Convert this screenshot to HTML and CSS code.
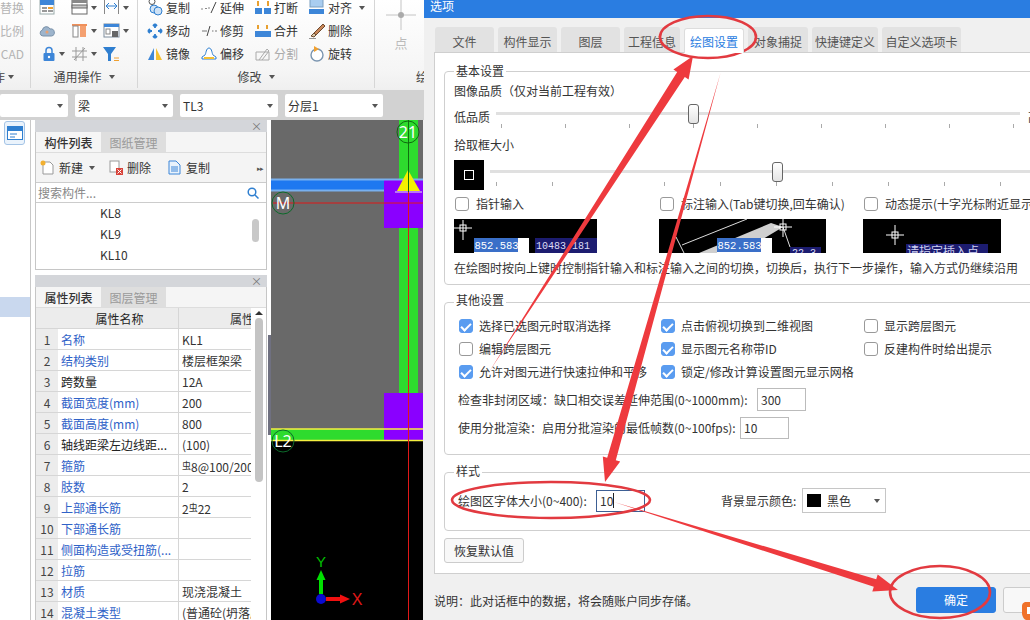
FILE: index.html
```html
<!DOCTYPE html>
<html lang="zh-CN">
<head>
<meta charset="utf-8">
<title>选项</title>
<link rel="stylesheet" href="styles.css">
</head>
<body>
<div class="app">
  <div class="main">
    <div class="ribbon">
      <section class="rgroup g-file">
        <div class="rtools">
          <div class="clip-left muted">替换</div>
          <div class="clip-left muted">比例</div>
          <div class="clip-left muted">CAD</div>
        </div>
        <div class="glabel clip-left"><span>操作</span><i class="caret"></i></div>
      </section>
      <section class="rgroup g-common">
        <div class="rtools icon-grid">
          <span class="ti"><svg width="16" height="16" viewBox="0 0 16 16"><rect x="1" y="-1" width="14" height="15" fill="#fff" stroke="#9aa"/><rect x="1" y="-1" width="14" height="6" fill="#3d86d8"/><rect x="3" y="7" width="5" height="2" fill="#999"/><rect x="9" y="7" width="5" height="2" fill="#f0a030"/><rect x="3" y="10" width="5" height="2" fill="#999"/><rect x="9" y="10" width="5" height="2" fill="#999"/></svg></span>
          <span class="ti"><svg width="17" height="16" viewBox="0 0 17 16"><rect x="1" y="0" width="15" height="14" fill="#fff" stroke="#666"/><rect x="1" y="0" width="15" height="3" fill="#888"/><rect x="1" y="5" width="15" height="3" fill="#c8c8c8" stroke="#666"/></svg><i class="caret"></i></span>
          <span class="ti"><svg width="17" height="16" viewBox="0 0 17 16"><path d="M1.500 0v14M15.500 0v14" stroke="#888" fill="none"/><path d="M3 6h11M3 6l3-3M3 6l3 3M14 6l-3-3M14 6l-3 3" stroke="#2f7fd0" fill="none"/></svg><i class="caret"></i></span>
          <span class="ti"><svg width="16" height="16" viewBox="0 0 16 16"><path d="M4 13a3 3 0 0 1-.6-5.900A4 4 0 0 1 11 6a3.500 3.500 0 0 1 1.500 7z" fill="#9db4cc" stroke="#7890a8"/><circle cx="8" cy="9" r="1.500" fill="#e9a070"/></svg></span>
          <span class="ti"><svg width="17" height="16" viewBox="0 0 17 16"><rect x="1" y="1" width="15" height="2" fill="#f0905a"/><rect x="2" y="3" width="5" height="11" fill="#fff" stroke="#888"/><rect x="9" y="3" width="6" height="11" fill="#f4a070"/></svg><i class="caret"></i></span>
          <span class="ti"><svg width="17" height="16" viewBox="0 0 17 16"><rect x="1" y="1" width="15" height="13" fill="#fff" stroke="#7d8c9c"/><rect x="1" y="1" width="15" height="3" fill="#3d86d8"/><rect x="3" y="6" width="4" height="5" fill="none" stroke="#888"/><rect x="9" y="8" width="6" height="6" fill="#666"/></svg><i class="caret"></i></span>
          <span class="ti pad-lock"><svg width="14" height="16" viewBox="0 0 14 16"><path d="M4 7V4.500a3 3 0 0 1 6 0V7" fill="none" stroke="#3d86d8" stroke-width="1.500"/><rect x="1.500" y="7" width="11" height="8" rx="1" fill="#3d86d8"/><circle cx="7" cy="11" r="1.200" fill="#fff"/></svg><i class="caret"></i></span>
          <span class="ti"><svg width="17" height="16" viewBox="0 0 17 16"><path d="M5 1v14M12 1v14M1 5h15M1 11h15M3 14 14 2" stroke="#999" fill="none"/></svg><i class="caret"></i></span>
          <span class="ti"><svg width="17" height="16" viewBox="0 0 17 16"><path d="M0 1h13L8 8v7H5V8z" fill="#2f7fd0"/><path d="M11 12h5M11 14.500h5" stroke="#f0a030"/></svg></span>
        </div>
        <div class="glabel">通用操作<i class="caret"></i></div>
      </section>
      <section class="rgroup g-modify">
        <div class="rtools modify-grid">
          <span class="tl"><svg width="16" height="16" viewBox="0 0 16 16"><circle cx="5" cy="1.500" r="3" fill="none" stroke="#555"/><circle cx="7" cy="9" r="4" fill="#cfe2f5" stroke="#2f7fd0"/><circle cx="11" cy="11" r="4" fill="#cfe2f5" stroke="#2f7fd0"/></svg>复制</span>
          <span class="tl"><svg width="16" height="16" viewBox="0 0 16 16"><path d="M0 9h2M4 8.500h2M7 8h2" stroke="#888"/><path d="M10 13 15 2" stroke="#444"/></svg>延伸</span>
          <span class="tl"><svg width="16" height="16" viewBox="0 0 16 16"><rect y="8" width="7" height="6" fill="#3d86d8"/><rect x="9" y="8" width="7" height="6" fill="#3d86d8"/><path d="M3 1v5M13 1v5" stroke="#e8a030" stroke-width="2"/></svg>打断</span>
          <span class="tl"><svg width="16" height="16" viewBox="0 0 16 16"><rect x="1" y="-4" width="13" height="11" fill="#a9cdf0" stroke="#7d9fc0"/><rect y="9" width="15" height="5" fill="#3d86d8"/></svg>对齐<i class="caret"></i></span>
          <span class="tl"><svg width="16" height="16" viewBox="0 0 16 16"><path d="M8 5V1M8 1 6 3M8 1l2 2M8 11v4M8 15l-2-2M8 15l2-2M5 8H1M1 8l2-2M1 8l2 2M11 8h4M15 8l-2-2M15 8l-2 2" fill="none" stroke="#2f7fd0" stroke-width="1.800"/></svg>移动</span>
          <span class="tl"><svg width="16" height="16" viewBox="0 0 16 16"><path d="M1 8h5M11 8h1.500M14 8h2" stroke="#777"/><path d="M6 13 9 3" stroke="#444"/></svg>修剪</span>
          <span class="tl"><svg width="16" height="16" viewBox="0 0 16 16"><rect y="8" width="16" height="6" fill="#3d86d8"/><path d="M3 2v4M12 2v4" stroke="#e8a030" stroke-width="2"/></svg>合并</span>
          <span class="tl"><svg width="16" height="16" viewBox="0 0 16 16"><path d="M14 1 5 10l2 2 9-9z" fill="#c8875a" stroke="#6d4a30"/><path d="M5 10 2 13l3 1 2-2z" fill="#d8c8a8" stroke="#6d4a30"/><path d="M0 16h7" stroke="#333"/></svg>删除</span>
          <span class="tl"><svg width="16" height="16" viewBox="0 0 16 16"><path d="M7 2 1 14h6z" fill="#3d86d8"/><path d="M9 2l6 12H9z" fill="#f5c030"/></svg>镜像</span>
          <span class="tl"><svg width="16" height="16" viewBox="0 0 16 16"><path d="M1 13v-2l3-2c1-1 1-7 4-7s3 6 4 7l3 2v2z" fill="#fff" stroke="#2f7fd0"/><path d="M3 12h10" stroke="#f5c030" stroke-width="2"/></svg>偏移</span>
          <span class="tl off"><svg width="16" height="16" viewBox="0 0 16 16"><path d="M1 6h13v8H1zM4 14l8-11 2 2-7 9" fill="none" stroke="#aaa"/></svg>分割</span>
          <span class="tl"><svg width="16" height="16" viewBox="0 0 16 16"><circle cx="8" cy="9" r="6" fill="#fff" stroke="#7a95b0" stroke-width="1.400"/><path d="M5 0l5 3-5 3z" fill="#f0a030"/></svg>旋转</span>
        </div>
        <div class="glabel">修改<i class="caret"></i></div>
      </section>
      <section class="rgroup g-draw">
        <div class="point">
          <svg width="30" height="30" viewBox="0 0 30 30"><path d="M15 0v30M0 15h30" stroke="#c4c4c4"/><circle cx="15" cy="15" r="3" fill="#aaa"/></svg>
          <span>点</span>
        </div>
        <div class="glabel clip-right">绘图</div>
      </section>
    </div>
    <div class="selbar">
      <div class="combo combo-first"><i class="caret"></i></div>
      <div class="combo">梁<i class="caret"></i></div>
      <div class="combo">TL3<i class="caret"></i></div>
      <div class="combo">分层1<i class="caret"></i></div>
    </div>
    <div class="work">
      <aside class="side">
        <div class="side-icon">
          <svg width="16" height="14" viewBox="0 0 16 14"><rect x="0.500" y="0.500" width="15" height="13" fill="#fff" stroke="#2f7fd0"/><rect x="1" y="1" width="14" height="4" fill="#2f7fd0"/><path d="M3 8h7M3 11h5" stroke="#2f7fd0"/></svg>
        </div>
        <div class="side-sel"></div>
      </aside>
      <div class="panels">
        <section class="panel panel-list">
          <div class="pbar">×</div>
          <div class="ptabs"><span class="ptab on">构件列表</span><span class="ptab">图纸管理</span></div>
          <div class="ptools">
            <span class="pt"><svg width="15" height="15" viewBox="0 0 15 15"><path d="M3 2h7l3 3v9H3z" fill="#fff" stroke="#999"/><circle cx="3" cy="3" r="2.500" fill="#f2b030"/></svg>新建<i class="caret"></i></span>
            <span class="pt"><svg width="15" height="15" viewBox="0 0 15 15"><rect x="2" y="1" width="9" height="11" fill="#fff" stroke="#999"/><rect x="8" y="8" width="7" height="7" fill="#d8433a"/><path d="M9.500 9.500l4 4M13.500 9.500l-4 4" stroke="#fff"/></svg>删除</span>
            <span class="pt"><svg width="15" height="15" viewBox="0 0 15 15"><path d="M2 1h7l4 4v9H2z" fill="#eaf3fc" stroke="#3d86d8"/><path d="M4 7h7M4 9h7M4 11h7" stroke="#3d86d8"/></svg>复制</span>
            <span class="more">▸▸</span>
          </div>
          <div class="psearch"><span>搜索构件...</span>
            <svg width="12" height="12" viewBox="0 0 12 12"><circle cx="5" cy="5" r="3.800" fill="none" stroke="#2f7fd0" stroke-width="1.500"/><path d="M8 8l3.500 3.500" stroke="#2f7fd0" stroke-width="1.500"/></svg>
          </div>
          <div class="plist">
            <div>KL8</div><div>KL9</div><div>KL10</div>
            <i class="pthumb"></i>
          </div>
        </section>
        <section class="panel panel-prop">
          <div class="pbar">×</div>
          <div class="ptabs"><span class="ptab on">属性列表</span><span class="ptab">图层管理</span></div>
          <div class="ptable">
            <div class="trow thead"><span class="c0"></span><span class="c1">属性名称</span><span class="c2">属性值</span></div>
            <div class="trow"><span class="c0">1</span><span class="c1 link">名称</span><span class="c2">KL1</span></div>
            <div class="trow"><span class="c0">2</span><span class="c1 link">结构类别</span><span class="c2">楼层框架梁</span></div>
            <div class="trow"><span class="c0">3</span><span class="c1">跨数量</span><span class="c2">12A</span></div>
            <div class="trow"><span class="c0">4</span><span class="c1 link">截面宽度(mm)</span><span class="c2">200</span></div>
            <div class="trow"><span class="c0">5</span><span class="c1 link">截面高度(mm)</span><span class="c2">800</span></div>
            <div class="trow"><span class="c0">6</span><span class="c1">轴线距梁左边线距...</span><span class="c2">(100)</span></div>
            <div class="trow"><span class="c0">7</span><span class="c1 link">箍筋</span><span class="c2"><small>虫</small>8@100/200</span></div>
            <div class="trow"><span class="c0">8</span><span class="c1 link">肢数</span><span class="c2">2</span></div>
            <div class="trow"><span class="c0">9</span><span class="c1 link">上部通长筋</span><span class="c2">2<small>虫</small>22</span></div>
            <div class="trow"><span class="c0">10</span><span class="c1 link">下部通长筋</span><span class="c2"></span></div>
            <div class="trow"><span class="c0">11</span><span class="c1 link">侧面构造或受扭筋(...</span><span class="c2"></span></div>
            <div class="trow"><span class="c0">12</span><span class="c1 link">拉筋</span><span class="c2"></span></div>
            <div class="trow"><span class="c0">13</span><span class="c1 link">材质</span><span class="c2">现浇混凝土</span></div>
            <div class="trow"><span class="c0">14</span><span class="c1 link">混凝土类型</span><span class="c2">(普通砼(坍落度</span></div>
            <div class="tscroll"><i class="tup"></i><i class="tthumb"></i></div>
          </div>
        </section>
      </div>
      <div class="splitter"><i></i></div>
      <svg class="canvas" width="152" height="500" viewBox="270 120 152 500">
        <rect x="270" y="120" width="152" height="500" fill="#000"/>
        <rect x="270" y="120" width="152" height="321" fill="#696969"/>
        <rect x="398" y="120" width="19" height="273" fill="#2edb2e"/>
        <rect x="383" y="180" width="39" height="48" fill="#8a00ff"/>
        <rect x="383" y="393" width="39" height="48" fill="#8a00ff"/>
        <rect x="270" y="180" width="113" height="10" fill="#1e78f0"/>
        <path d="M270 179.500h152M270 190.500h113" stroke="#78b0ee" stroke-width="2"/>
        <rect x="270" y="429" width="113" height="11" fill="#2edb2e"/>
        <path d="M270 429h152M270 440.500h152" stroke="#f5f040" stroke-width="1.600"/>
        <path d="M407 170l12 21h-23z" fill="#f5f000"/>
        <path d="M394 192h27" stroke="#e8e8f0"/>
        <path d="M407.500 120v72" stroke="#107010"/>
        <path d="M407.500 192V620" stroke="#e01818"/>
        <path d="M272 203h150" stroke="#e01818"/>
        <g class="axis-tag">
          <circle cx="407" cy="132" r="11" fill="none" stroke="#0e6a0e"/><text x="407" y="138">21</text>
          <circle cx="282" cy="203" r="11" fill="none" stroke="#0c6a2a"/><text x="282" y="209">M</text>
          <circle cx="282" cy="441" r="11" fill="none" stroke="#0c6a2a"/><text x="282" y="447">L2</text>
        </g>
        <path d="M320 594v-16" stroke="#00e000" stroke-width="4"/>
        <path d="M320 570l4.500 10h-9z" fill="#00e000"/>
        <path d="M325 599h16" stroke="#f01010" stroke-width="4"/>
        <path d="M349 599l-10-4.500v9z" fill="#f01010"/>
        <circle cx="320" cy="599" r="5" fill="#0a0ad0"/>
        <text class="axis-y" x="320" y="567">Y</text>
        <text class="axis-x" x="356" y="605">X</text>
      </svg>
      <div class="edge"></div>
    </div>
  </div>

  <div class="dialog">
    <div class="dtitle">选项</div>
    <div class="dtabs">
      <span class="dtab">文件</span><span class="dtab">构件显示</span><span class="dtab">图层</span><span class="dtab">工程信息</span><span class="dtab on">绘图设置</span><span class="dtab">对象捕捉</span><span class="dtab">快捷键定义</span><span class="dtab">自定义选项卡</span>
    </div>
    <div class="dpanel">
      <div class="fs fs-basic">
        <span class="legend">基本设置</span>
        <div class="line">图像品质（仅对当前工程有效）</div>
        <div class="qrow">
          <span class="qlabel">低品质</span>
          <div class="slider s-quality"><i class="track"></i><i class="thumb"></i>
            <div class="ticks"><i></i><i></i><i></i><i></i><i></i><i></i><i></i><i></i><i></i></div>
          </div>
          <span class="qhigh">高品质</span>
        </div>
        <div class="line line-pick">拾取框大小</div>
        <div class="prow">
          <div class="pickbox"><i></i></div>
          <div class="slider s-pick"><i class="track"></i><i class="thumb"></i>
            <div class="ticks"><i></i><i></i><i></i><i></i><i></i><i></i><i></i><i></i><i></i><i></i></div>
          </div>
        </div>
        <div class="pgrid">
          <label class="chk"><i class="box"></i>指针输入</label>
          <label class="chk"><i class="box"></i>标注输入(Tab键切换,回车确认)</label>
          <label class="chk"><i class="box"></i>动态提示(十字光标附近显示提示)</label>
          <svg class="pv" width="143" height="34" viewBox="0 0 143 34">
            <rect width="143" height="34" fill="#000"/>
            <path d="M9 1v20M0 9h18" stroke="#fff"/><rect x="6" y="6" width="6" height="6" fill="none" stroke="#fff"/>
            <rect x="20" y="19" width="55" height="15" fill="#fff"/><rect x="20" y="19" width="44" height="14" fill="#3a6fc8"/>
            <rect x="81" y="19" width="62" height="15" fill="#1c1c70"/>
            <text class="pvt" x="20.500" y="30">852.583</text><text class="pvn" x="82" y="30">10483.181</text>
          </svg>
          <svg class="pv" width="167" height="34" viewBox="0 0 167 34">
            <rect width="167" height="34" fill="#000"/>
            <path d="M23 26 88 0M17 18l8 16M124 8l7 20" stroke="#ddd" fill="none"/>
            <path d="M40 34 112 4l12 4-20 12v14z" fill="#cfcfcf"/>
            <path d="M124 0v18M115 8h18" stroke="#fff"/><rect x="121" y="5" width="6" height="6" fill="none" stroke="#fff"/>
            <rect x="58" y="19" width="55" height="15" fill="#fff"/><rect x="58" y="19" width="44" height="14" fill="#3a6fc8"/>
            <rect x="131" y="28" width="31" height="6" fill="#1c1c70"/>
            <text class="pvt" x="58.500" y="30">852.583</text><text class="pvn" x="133" y="37">22.3</text>
          </svg>
          <svg class="pv" width="138" height="34" viewBox="0 0 138 34">
            <rect width="138" height="34" fill="#000"/>
            <path d="M32 6v20M23 16h18" stroke="#fff"/><rect x="29" y="13" width="6" height="6" fill="none" stroke="#fff"/>
            <rect x="43" y="25" width="82" height="9" fill="#1c1c70"/>
            <text class="pvc" x="44" y="37">请指定插入点</text>
          </svg>
        </div>
        <div class="line line-help">在绘图时按向上键时控制指针输入和标注输入之间的切换，切换后，执行下一步操作，输入方式仍继续沿用</div>
      </div>
      <div class="fs fs-other">
        <span class="legend">其他设置</span>
        <div class="ogrid">
          <label class="chk"><i class="box on"></i>选择已选图元时取消选择</label>
          <label class="chk"><i class="box on"></i>点击俯视切换到二维视图</label>
          <label class="chk"><i class="box"></i>显示跨层图元</label>
          <label class="chk"><i class="box"></i>编辑跨层图元</label>
          <label class="chk"><i class="box on"></i>显示图元名称带ID</label>
          <label class="chk"><i class="box"></i>反建构件时给出提示</label>
          <label class="chk"><i class="box on"></i>允许对图元进行快速拉伸和平移</label>
          <label class="chk"><i class="box on"></i>锁定/修改计算设置图元显示网格</label>
        </div>
        <div class="frow f-gap"><span class="flabel w-gap">检查非封闭区域：缺口相交误差延伸范围(0~1000mm):</span><span class="field">300</span></div>
        <div class="frow f-fps"><span class="flabel w-fps">使用分批渲染：启用分批渲染的最低帧数(0~100fps):</span><span class="field">10</span></div>
      </div>
      <div class="fs fs-style">
        <span class="legend">样式</span>
        <div class="frow f-style">
          <span class="flabel w-font">绘图区字体大小(0~400):</span>
          <span class="field focus">10<i class="cursor"></i></span>
          <span class="flabel w-bg">背景显示颜色:</span>
          <span class="select"><i class="swatch"></i>黑色<i class="caret"></i></span>
        </div>
      </div>
      <button class="btn restore" type="button">恢复默认值</button>
    </div>
    <div class="dfoot">
      <span class="note">说明：此对话框中的数据，将会随账户同步存储。</span>
      <button class="btn primary" type="button">确定</button>
      <button class="btn cancel" type="button"></button>
    </div>
  </div>

  <svg class="marks" width="1030" height="620" viewBox="0 0 1030 620">
    <g fill="#ee3a3e">
      <path d="M489 372 684.800 76.900 688.600 79.400 693 56 673.400 69.600 677.200 72.100z"/>
      <path d="M720.500 73 615.800 460.200 620.200 461.400 605 482 602.800 456.600 607.200 457.800z"/>
      <path d="M614 502 873.800 586.800 872.300 591.600 898 590 877.700 574.400 876.200 579.200z"/>
    </g>
    <g fill="none" stroke="#e23a40" stroke-width="2.600">
      <ellipse cx="708" cy="37" rx="48" ry="21"/>
      <ellipse cx="551" cy="500" rx="99" ry="18"/>
      <ellipse cx="940" cy="592" rx="50" ry="26"/>
    </g>
    <path d="M1030 602h-5q-3 1-3 4v8q1 5 4 6h4z" fill="#f0722a"/>
    <path d="M1030 607h-3v7h3z" fill="#fff"/>
  </svg>
</div>
</body>
</html>
```
FILE: styles.css
```css
* { box-sizing: border-box; }
html, body { margin: 0; padding: 0; background: #fff; }
body { font: 12px/18px "Noto Sans CJK SC", "Noto Sans", sans-serif; color: #333; }
i { display: block; font-style: normal; }
.app { position: relative; display: flex; width: 1030px; height: 620px; overflow: hidden; }
.caret { display: inline-block; width: 0; height: 0; border: 3px solid transparent; border-top: 4px solid #555; border-bottom: 0; vertical-align: middle; }

/* left application */
.main { flex: none; width: 424px; display: flex; flex-direction: column; }
.ribbon { display: flex; height: 90px; background: linear-gradient(#fff, #f5f5f5 80%, #efefef); overflow: hidden; }
.rgroup { display: flex; flex-direction: column; border-right: 1px solid #d6d6d6; height: 88px; }
.g-file { width: 31px; }
.g-common { width: 107px; }
.g-modify { width: 237px; }
.g-draw { width: 49px; border-right: 0; }
.rtools { display: grid; grid-auto-rows: 23px; margin-top: -4px; height: 69px; align-items: center; }
.clip-left { display: flex; justify-content: flex-end; white-space: nowrap; }
.muted { color: #b4b4b4; padding-right: 14px; font-size: 12px; }
.glabel { flex: none; height: 23px; display: flex; align-items: center; justify-content: center; gap: 7px; color: #444; }
.glabel.clip-left { justify-content: flex-end; gap: 3px; padding-right: 16px; color: #444; }
.clip-right { justify-content: flex-start; white-space: nowrap; padding-left: 41px; }
.icon-grid { grid-template-columns: 32px 32px 32px; padding-left: 8px; }
.ti { display: flex; align-items: center; gap: 3px; }
.pad-lock { padding-left: 3px; }
.modify-grid { grid-template-columns: 54px 54px 54px 74px; padding-left: 9px; }
.tl { display: flex; align-items: center; gap: 3px; color: #333; white-space: nowrap; }
.tl .caret { margin-left: 4px; }
.off { color: #aaa; }
.point { height: 65px; display: flex; flex-direction: column; align-items: center; color: #bbb; padding-left: 3px; font-size: 13px; }
.point span { margin-top: 4px; }

.selbar { flex: none; height: 30px; background: #d2d2d2; display: flex; gap: 7px; padding: 4px 0 3px; }
.combo { flex: none; width: 98px; height: 23px; background: #fff; border-radius: 2px; display: flex; align-items: center; justify-content: space-between; padding: 0 5px 0 3px; }
.combo-first { width: 68px; justify-content: flex-end; }

.work { flex: 1; display: flex; min-height: 0; background: #fff; }
.side { flex: none; width: 31px; border-right: 1px solid #c8c8c8; padding-top: 1px; }
.side-icon { width: 21px; height: 24px; margin-left: 4px; border: 1px solid #a4c4e6; border-radius: 3px; background: #eaf3fc; display: flex; align-items: center; justify-content: center; }
.side-sel { height: 20px; background: #c9d8ee; margin-top: 152px; }
.panels { flex: none; width: 232px; margin-left: 4px; display: flex; flex-direction: column; gap: 5px; }
.panel { border: 1px solid #c6c6c6; border-top: 0; background: #fff; }
.panel-list { height: 150px; }
.panel-prop { flex: 1; border-bottom: 0; }
.pbar { height: 12px; background: #d4d6da; color: #777; font-size: 11px; line-height: 12px; text-align: right; padding-right: 5px; margin: 0 -1px; }
.ptabs { height: 21px; display: flex; background: #f5f5f5; border-bottom: 1px solid #ddd; }
.ptab { width: 65px; background: #dedede; color: #9a9a9a; font-size: 12px; line-height: 21px; text-align: center; }
.ptab.on { background: #f5f5f5; color: #333; font-weight: 500; }
.ptools { height: 30px; background: #f4f4f4; border-bottom: 1px solid #ccc; display: flex; align-items: center; padding-left: 4px; gap: 16px; position: relative; }
.pt { display: flex; align-items: center; gap: 4px; white-space: nowrap; }
.pt .caret { margin-left: -1px; }
.pt:first-child .caret { margin-left: 2px; }
.pt:first-child { margin-right: -3px; }
.more { margin-left: auto; font-size: 7px; letter-spacing: -1px; color: #555; padding-right: 3px; }
.psearch { height: 20px; border-bottom: 1px solid #ccc; display: flex; align-items: center; justify-content: space-between; color: #888; padding: 0 7px 0 2px; }
.plist { position: relative; padding-left: 64px; color: #333; margin-top: -1px; }
.plist div { height: 21px; line-height: 21px; }
.plist .pthumb { position: absolute; left: 216px; top: 17px; width: 7px; height: 23px; border-radius: 4px; background: #c8c8c8; }
.ptable { position: relative; height: 312px; overflow: hidden; }
.trow { display: grid; grid-template-columns: 22px 121px 88px; height: 21px; line-height: 21px; border-bottom: 1px solid #d6d6d6; }
.trow span { white-space: nowrap; overflow: hidden; padding-left: 3px; }
.c0 { background: #ececec; text-align: center; padding: 0 !important; color: #444; }
.c1 { border-right: 1px solid #d6d6d6; color: #222; }
.link { color: #2f62c8; }
.thead { background: #ececec; }
.thead .c1 { text-align: center; }
.thead .c2 { text-align: right; padding-right: 1px; }
.trow small { font-size: 9px; vertical-align: 3px; }
.tscroll { position: absolute; right: 0; top: 0; width: 15px; height: 100%; background: #fff; }
.tup { width: 0; height: 0; margin: 3px auto 0; border: 4px solid transparent; border-bottom: 4px solid #333; border-top: 0; }
.tthumb { width: 8px; height: 164px; margin: 3px auto 0; border-radius: 4px; background: #c4c4c4; }
.splitter { flex: none; width: 4px; background: #fff; padding-left: 1px; }
.splitter i { width: 3px; height: 100px; margin-top: 215px; background: #6f7080; }
.canvas { flex: none; display: block; }
.edge { flex: 1; background: #efefef; }
.axis-tag text { fill: #fff; font: 16px "Noto Sans", sans-serif; text-anchor: middle; }
.axis-y { fill: #00c000; font: 15px "Liberation Sans", sans-serif; text-anchor: middle; }
.axis-x { fill: #e01818; font: 16px "Liberation Sans", sans-serif; text-anchor: middle; }

/* dialog */
.dialog { flex: none; width: 640px; background: #f0f0f0; display: flex; flex-direction: column; }
.dtitle { flex: none; height: 18px; background: #2a7de1; color: #fff; line-height: 12px; padding-left: 6px; overflow: hidden; }
.dtabs { flex: none; height: 34px; padding: 9px 0 0 11px; display: grid; grid-template-columns: 59px 59px 59px 56px 60px 60px 66px 79px; column-gap: 4px; align-items: end; }
.dtab { height: 25px; line-height: 21px; padding-top: 4px; text-align: center; background: #e2e2e2; color: #555; border-radius: 3px 3px 0 0; white-space: nowrap; }
.dtab.on { height: 25px; padding-top: 2px; background: #fff; color: #2a7de1; border: 1px solid #ddd; border-bottom: 0; margin-bottom: -1px; position: relative; z-index: 1; }
.dpanel { flex: none; height: 522px; margin-left: 10px; background: #fff; border: 1px solid #cfcfcf; padding: 18px 0 0 9px; }
.fs { position: relative; border: 1px solid #cfcfcf; border-radius: 4px; }
.legend { position: absolute; left: 9px; top: -10px; background: #fff; padding: 0 2px; line-height: 18px; color: #333; }
.fs-other .legend { top: -12px; }
.fs-style .legend { top: -11px; }
.fs-basic { height: 214px; padding: 10px 0 0 9px; }
.fs-other { height: 153px; margin-top: 17px; padding: 11px 0 0 14px; }
.fs-style { height: 59px; margin-top: 17px; padding: 15px 0 0 13px; }
.line { white-space: nowrap; height: 18px; }
.line-pick { margin-top: 8px; }
.line-help { margin-top: 6px; }
.qrow { display: flex; margin-top: 4px; height: 24px; white-space: nowrap; }
.qlabel { width: 42px; padding-top: 4px; flex: none; }
.qhigh { flex: none; margin-left: 8px; padding-top: 4px; }
.slider { position: relative; flex: none; height: 26px; }
.s-quality { width: 524px; }
.s-pick { width: 545px; }
.track { position: absolute; left: 0; right: 0; top: 8px; height: 3px; background: #e0e0e0; }
.thumb { position: absolute; top: 0; width: 11px; height: 20px; background: linear-gradient(#fff, #e4e4e4); border: 1px solid #666; border-radius: 3px; }
.s-quality .thumb { left: 192px; }
.s-pick .thumb { left: 282px; }
.ticks { position: absolute; top: 20px; display: flex; }
.ticks i { width: 1px; height: 4px; background: #aaa; flex: none; }
.s-quality .ticks { left: 5px; gap: 63px; }
.s-pick .ticks { left: 6px; gap: 55px; }
.prow { display: flex; gap: 6px; margin-top: 6px; height: 30px; }
.pickbox { flex: none; width: 30px; height: 30px; background: #000; display: flex; align-items: center; justify-content: center; }
.pickbox i { width: 10px; height: 10px; border: 1px solid #fff; }
.s-pick { margin-top: 2px; }
.pgrid { display: grid; grid-template-columns: 205px 204px 1fr; row-gap: 8px; margin-top: 7px; }
.chk { display: flex; align-items: center; gap: 7px; height: 14px; white-space: nowrap; }
.pgrid .chk { padding-left: 1px; }
.box { flex: none; width: 14px; height: 14px; border: 1px solid #999; border-radius: 3px; background: #fff; position: relative; }
.box.on { background: #5a9cf0; border-color: #5a9cf0; }
.box.on::after { content: ""; position: absolute; left: 3px; top: 1px; width: 4px; height: 8px; border: solid #fff; border-width: 0 2px 2px 0; transform: rotate(45deg); }
.pv { display: block; }
.pvt { fill: #fff; font: 10.500px "Liberation Mono", monospace; }
.pvn { fill: #dcdcf5; font: 10px "Liberation Mono", monospace; }
.pvc { fill: #cfd0f0; font: 12px "Noto Sans CJK SC", sans-serif; }
.ogrid { display: grid; grid-template-columns: 202px 203px 1fr; grid-auto-rows: 23px; align-items: center; }
.ogrid .chk { gap: 6px; }
.frow { display: flex; align-items: center; white-space: nowrap; }
.f-gap { margin: 5px 0 0 -1px; height: 23px; }
.f-fps { margin: 6px 0 0 -1px; height: 22px; }
.f-style { height: 25px; }
.flabel { flex: none; }
.w-gap { width: 299px; }
.w-fps { width: 282px; }
.w-font { width: 138px; }
.w-bg { width: 81px; margin-left: 76px; }
.field { flex: none; width: 49px; height: 100%; border: 1px solid #bbb; background: #fff; padding-left: 3px; line-height: 20px; display: flex; align-items: center; }
.f-gap .field { line-height: 21px; }
.f-style .field { height: 22px; }
.field.focus { border-color: #3d5f94; }
.cursor { width: 1px; height: 15px; background: #222; }
.select { flex: none; width: 84px; height: 25px; border: 1px solid #c6c6c6; background: #fff; display: flex; align-items: center; padding: 0 5px 0 4px; }
.swatch { width: 14px; height: 13px; background: #000; margin-right: 6px; flex: none; }
.select .caret { margin-left: auto; }
.btn { font: inherit; color: #333; background: #fff; border: 1px solid #ccc; border-radius: 3px; padding: 0; }
.restore { display: block; width: 80px; height: 25px; margin-top: 7px; background: #f8f8f8; }
.dfoot { flex: 1; display: flex; padding: 13px 0 0 10px; }
.note { flex: none; width: 482px; height: 26px; line-height: 28px; white-space: nowrap; }
.primary { flex: none; width: 80px; height: 26px; background: #2a7de1; border-color: #2a7de1; color: #fff; }
.cancel { flex: none; width: 60px; height: 26px; margin-left: 7px; background: #f8f8f8; }

/* red hand-drawn marks over the screenshot */
.marks { position: absolute; left: 0; top: 0; pointer-events: none; }
```
